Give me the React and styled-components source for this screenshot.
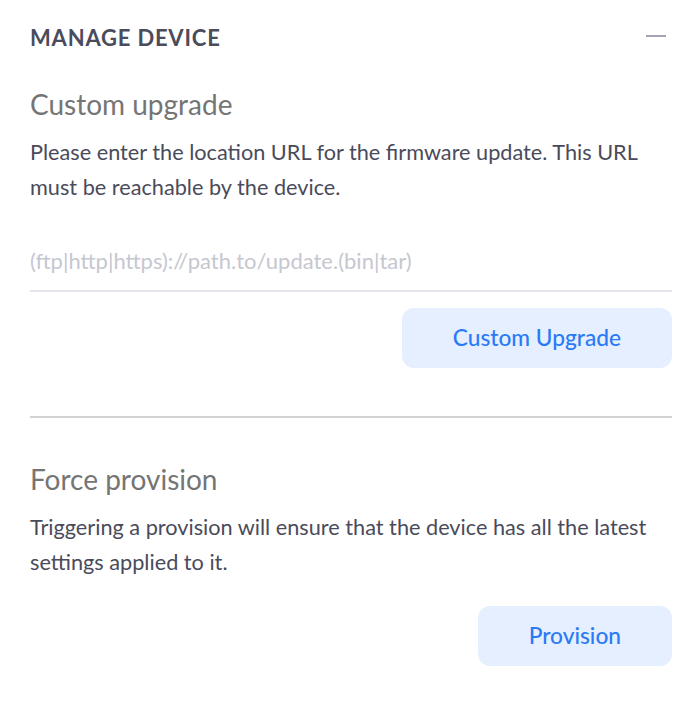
import React from "react";
import styled, { createGlobalStyle } from "styled-components";

const GlobalStyle = createGlobalStyle`
  body {
    margin: 0;
    background: #ffffff;
    font-family: Lato, "Open Sans", sans-serif;
  }
`;

const Panel = styled.div`
  padding: 25px 28px 0 30px;
`;

const Header = styled.div`
  display: flex;
  justify-content: space-between;
  align-items: center;
`;

const Heading = styled.h2`
  margin: 0;
  font-size: 22px;
  line-height: 1.2;
  font-weight: 700;
  letter-spacing: 0.8px;
  color: #4a4c5b;
`;

const Collapse = styled.button`
  width: 20px;
  height: 2px;
  padding: 0;
  margin: 0 6px 4px 0;
  border: 0;
  background: #a2a5b5;
`;

const Section = styled.section`
  margin-top: ${(p) => p.$top}px;
`;

const Title = styled.h3`
  margin: 0;
  font-size: 28px;
  line-height: 1.2;
  font-weight: 400;
  color: #757575;
`;

const Text = styled.p`
  margin: 13px 0 0;
  font-size: 21.7px;
  line-height: 35px;
  color: #4a4b5a;
`;

const UrlInput = styled.input`
  display: block;
  width: 100%;
  box-sizing: border-box;
  margin-top: 30px;
  padding: 13px 0 16px;
  border: 0;
  border-bottom: 2px solid #e4e4ec;
  font-family: inherit;
  font-size: 22px;
  line-height: 26px;
  color: #4a4b5a;

  &::placeholder {
    color: #c6c7d0;
  }
  &:focus {
    outline: none;
  }
`;

const Actions = styled.div`
  display: flex;
  justify-content: flex-end;
  margin-top: ${(p) => p.$top}px;
`;

const ActionButton = styled.button`
  height: 60px;
  padding: 0 51px;
  border: 0;
  border-radius: 12px;
  background: #e5efff;
  color: #2a7af6;
  font-family: inherit;
  font-size: 22.7px;
  font-weight: 500;
  cursor: pointer;
`;

const Divider = styled.hr`
  margin: 48px 0 0;
  border: 0;
  height: 2px;
  background: #d2d2d2;
`;

export default function App() {
  return (
    <>
      <GlobalStyle />
      <Panel>
        <Header>
          <Heading>MANAGE DEVICE</Heading>
          <Collapse aria-label="Collapse" />
        </Header>

        <Section $top={37}>
          <Title>Custom upgrade</Title>
          <Text>
            Please enter the location URL for the firmware update. This URL
            must be reachable by the device.
          </Text>
          <UrlInput placeholder="(ftp|http|https)://path.to/update.(bin|tar)" />
          <Actions $top={16}>
            <ActionButton>Custom Upgrade</ActionButton>
          </Actions>
        </Section>

        <Divider />

        <Section $top={45}>
          <Title>Force provision</Title>
          <Text>
            Triggering a provision will ensure that the device has all the
            latest settings applied to it.
          </Text>
          <Actions $top={26}>
            <ActionButton>Provision</ActionButton>
          </Actions>
        </Section>
      </Panel>
    </>
  );
}
